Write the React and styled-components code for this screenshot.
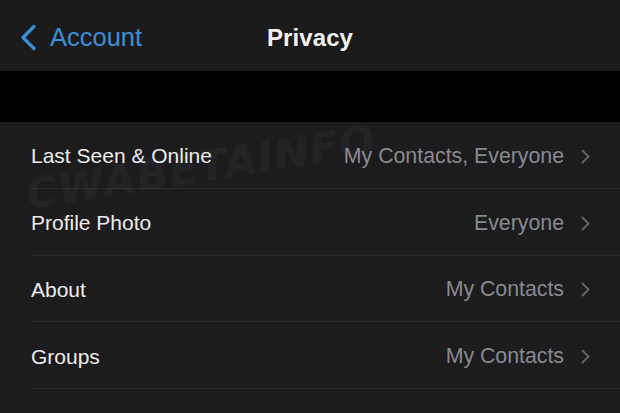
import React from "react";
import styled, { createGlobalStyle } from "styled-components";

const Global = createGlobalStyle`
  html, body { margin: 0; padding: 0; background: #1c1c1e; }
  body { font-family: "Liberation Sans", Arial, sans-serif; -webkit-font-smoothing: antialiased; }
`;

const Screen = styled.div`
  width: 620px;
  height: 413px;
  overflow: hidden;
  position: relative;
  background: #1c1c1e;
  display: flex;
  flex-direction: column;
`;

const NavBar = styled.header`
  height: 71px;
  flex: none;
  background: #1b1b1b;
  display: grid;
  grid-template-columns: 1fr auto 1fr;
  align-items: center;
`;

const Back = styled.div`
  display: flex;
  align-items: center;
  gap: 13px;
  padding-left: 19px;
  padding-top: 4px;
  color: #3a8fd9;
  font-size: 25.5px;
`;

const Title = styled.h1`
  margin: 0;
  padding-top: 4px;
  color: #f2f2f2;
  font-size: 24px;
  font-weight: 700;
  letter-spacing: 0.1px;
`;

const Gap = styled.div`
  height: 51px;
  flex: none;
  background: #000;
`;

const List = styled.div`
  display: flex;
  flex-direction: column;
  background: #1c1c1e;
  position: relative;
  flex: 1;
`;

const Row = styled.div`
  height: 66.75px;
  flex: none;
  margin-left: 31px;
  padding-right: 30px;
  padding-top: 3px;
  display: flex;
  align-items: center;
  border-bottom: 1px solid #2c2c2e;
  box-sizing: border-box;
`;

const Label = styled.span`
  color: #ececec;
  font-size: 21px;
  flex: 1;
`;

const Value = styled.span`
  color: #8a8a8e;
  font-size: 21.3px;
  margin-right: 17px;
`;

const Watermark = styled.div`
  position: absolute;
  left: 30px;
  top: 52px;
  font-family: "DejaVu Sans", sans-serif;
  font-weight: 900;
  font-style: italic;
  font-size: 42px;
  line-height: 42px;
  letter-spacing: 1px;
  color: rgba(255, 255, 255, 0.055);
  transform: rotate(-9deg);
  transform-origin: left bottom;
  pointer-events: none;
  white-space: nowrap;
`;

const BackChevron = () => (
  <svg width="18" height="27" viewBox="0 0 18 27" fill="none">
    <path d="M15 2.5 L4 13.5 L15 24.5" stroke="#3a8fd9" strokeWidth="3.2" strokeLinecap="round" strokeLinejoin="round" />
  </svg>
);

const Disclosure = () => (
  <svg width="9" height="15" viewBox="0 0 9 15" fill="none">
    <path d="M1.5 1.5 L7.5 7.5 L1.5 13.5" stroke="#636366" strokeWidth="2" strokeLinecap="round" strokeLinejoin="round" />
  </svg>
);

const rows = [
  ["Last Seen & Online", "My Contacts, Everyone"],
  ["Profile Photo", "Everyone"],
  ["About", "My Contacts"],
  ["Groups", "My Contacts"],
];

export default function App() {
  return (
    <Screen>
      <Global />
      <NavBar>
        <Back>
          <BackChevron />
          <span>Account</span>
        </Back>
        <Title>Privacy</Title>
        <div />
      </NavBar>
      <Gap />
      <List>
        {rows.map(([l, v]) => (
          <Row key={l}>
            <Label>{l}</Label>
            <Value>{v}</Value>
            <Disclosure />
          </Row>
        ))}
        <Watermark>CWABETAINFO</Watermark>
      </List>
    </Screen>
  );
}
